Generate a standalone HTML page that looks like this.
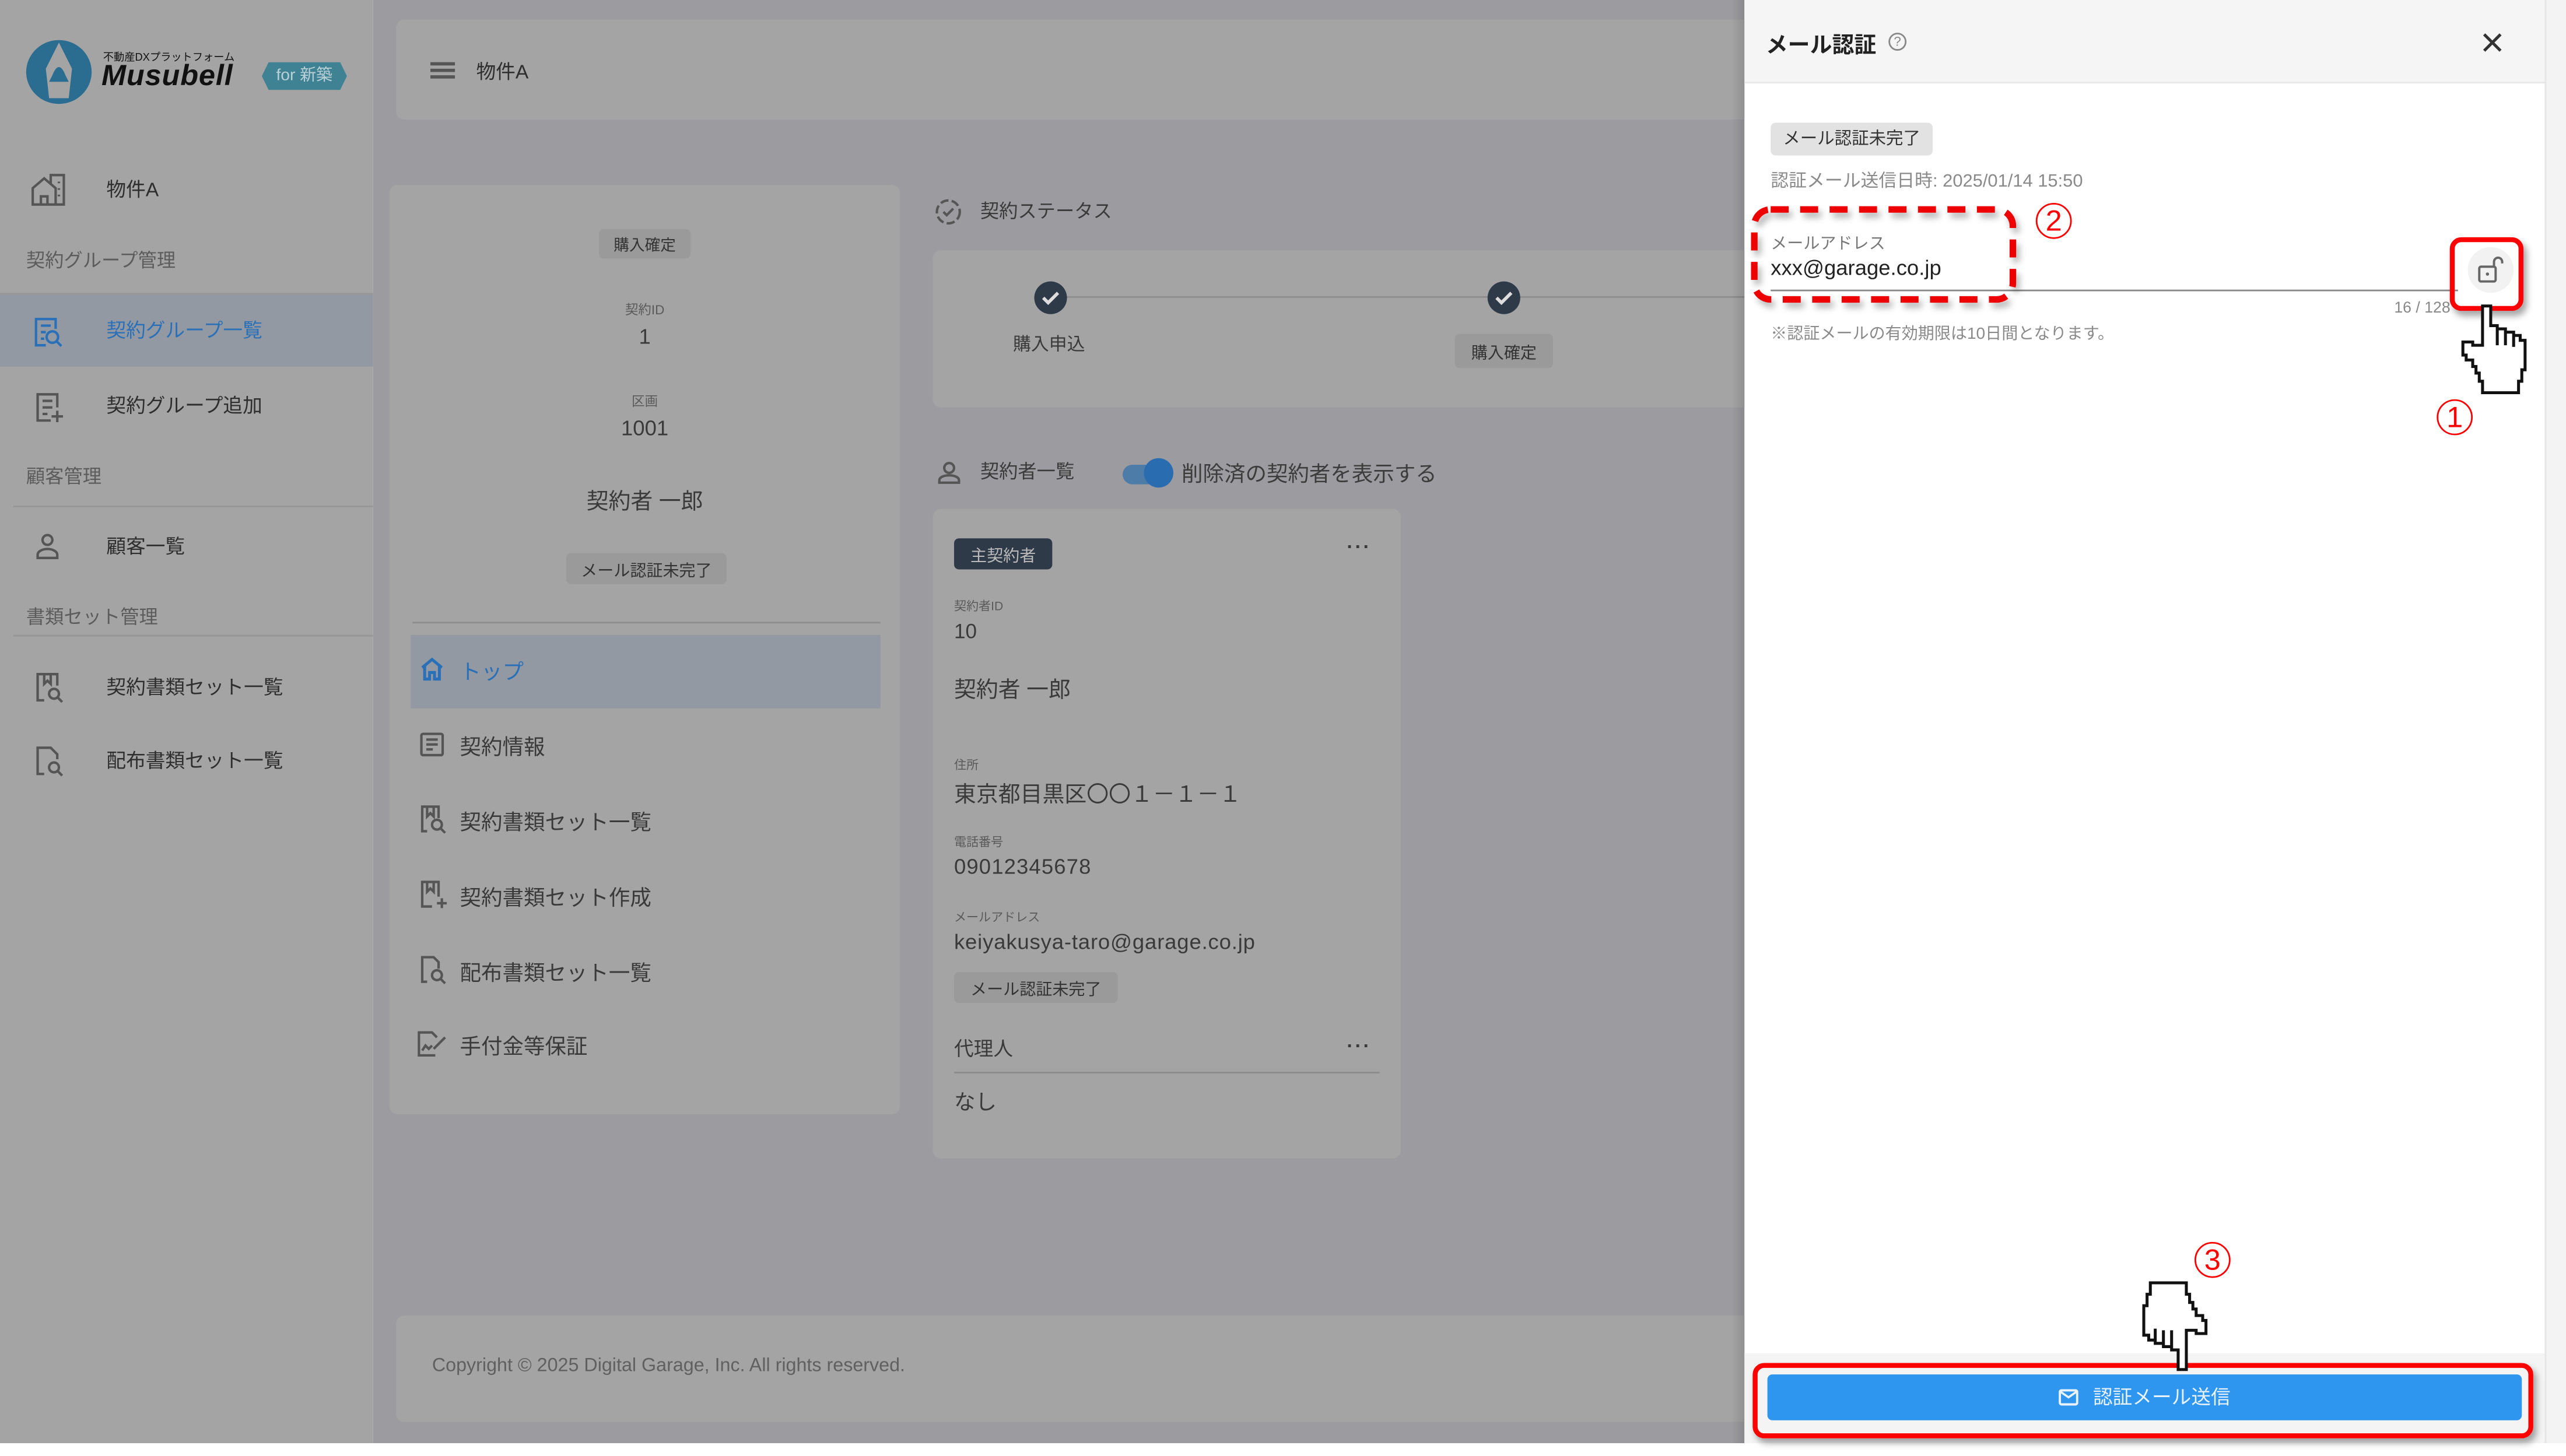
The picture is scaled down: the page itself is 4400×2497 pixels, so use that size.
<!DOCTYPE html>
<html><head><meta charset="utf-8">
<style>
*{box-sizing:border-box;margin:0;padding:0}
html,body{width:4400px;height:2497px;overflow:hidden;background:#fff}
#s{position:absolute;left:0;top:0;width:1568px;height:890px;transform:scale(2.80612);transform-origin:0 0;font-family:"Liberation Sans","Noto Sans CJK JP",sans-serif;color:#3a3a3a}
.a{position:absolute;white-space:nowrap}
.side{left:0;top:0;width:228px;height:882px;background:#a4a4a4}
.main{left:228px;top:0;width:838px;height:882px;background:#9c9ca0}
.card{background:#a4a4a4;border-radius:5px}
.nav{font-size:12px;color:#2e2e2e}
.sec{font-size:11.5px;color:#5c5c5c}
.chipg{background:#9a9a9a;border-radius:3px;font-size:10px;color:#333;padding:2px 9px}
.lbl{font-size:8px;color:#5a5a5a}
.ic{position:absolute;stroke:#555;fill:none;stroke-width:1.5}
.red{position:absolute;border:3px solid #f00;border-radius:7px;box-shadow:2px 3px 4px rgba(0,0,0,.35)}
.num{position:absolute;width:22px;height:22px;border:1.3px solid #f00;border-radius:50%;color:#f00;font-size:18px;line-height:20px;text-align:center}
</style></head><body><div id="s">
<div class="a side"></div>
<svg class="a" style="left:15px;top:24px" width="42" height="40" viewBox="0 0 42 40"><ellipse cx="21" cy="20" rx="20" ry="19.5" fill="#2a6d90"/><path d="M21 2 L13 18 L15 36 L27 36 L29 18 Z" fill="#a4a4a4"/><path d="M17 22 Q21 12 25 22 L27 26 L15 26 Z" fill="#2a6d90"/></svg>
<div class="a" style="left:63px;top:29px;font-size:6.5px;color:#111">不動産DXプラットフォーム</div>
<div class="a" style="left:62px;top:36px;font-size:18px;font-weight:bold;font-style:italic;color:#111;letter-spacing:.3px">Musubell</div>
<div class="a" style="left:160px;top:38px;width:52px;height:17px;background:#3e8293;clip-path:polygon(8% 0,92% 0,100% 50%,92% 100%,8% 100%,0 50%);color:#b9d0d6;font-size:10px;line-height:17px;text-align:center">for 新築</div>

<svg class="ic" style="left:19px;top:106px" width="22" height="20" viewBox="0 0 22 20"><path d="M1 19V9l7-6 7 6v10H1zM6 19v-5h4v5M12 6V1h8v18h-5M17 5v1M17 9v1M17 13v1"/></svg>
<div class="a nav" style="left:65px;top:107px">物件A</div>
<div class="a sec" style="left:16px;top:151px">契約グループ管理</div>
<div class="a" style="left:0;top:179px;width:228px;height:1px;background:#969696"></div>
<div class="a" style="left:0;top:180px;width:228px;height:44px;background:#9299a2"></div>
<svg class="ic" style="left:20px;top:193px;stroke:#2a70b8" width="20" height="20" viewBox="0 0 20 20"><path d="M14 8V2H2v16h6M5 6h6M5 10h3M5 14h2"/><circle cx="12" cy="13" r="3.5"/><path d="M14.5 15.5l3 3"/></svg>
<div class="a nav" style="left:65px;top:193px;color:#2a70b8">契約グループ一覧</div>
<svg class="ic" style="left:21px;top:239px" width="20" height="20" viewBox="0 0 20 20"><path d="M14 10V2H2v16h8M5 6h6M5 10h6M5 14h3M14 12v7M10.5 15.5h7"/></svg>
<div class="a nav" style="left:65px;top:239px">契約グループ追加</div>
<div class="a sec" style="left:16px;top:283px">顧客管理</div>
<div class="a" style="left:8px;top:309px;width:220px;height:1px;background:#969696"></div>
<svg class="ic" style="left:20px;top:325px" width="18" height="18" viewBox="0 0 18 18"><circle cx="9" cy="5" r="3"/><path d="M3 16v-2c0-2 3-3.5 6-3.5s6 1.5 6 3.5v2z"/></svg>
<div class="a nav" style="left:65px;top:325px">顧客一覧</div>
<div class="a sec" style="left:16px;top:369px">書類セット管理</div>
<div class="a" style="left:8px;top:388px;width:220px;height:1px;background:#969696"></div>
<svg class="ic" style="left:21px;top:410px" width="20" height="20" viewBox="0 0 20 20"><path d="M6 18H2V2h12v7M6 2v6l2-2 2 2V2"/><circle cx="12" cy="14" r="3"/><path d="M14.2 16.2l2.8 2.8"/></svg>
<div class="a nav" style="left:65px;top:411px">契約書類セット一覧</div>
<svg class="ic" style="left:21px;top:455px" width="20" height="20" viewBox="0 0 20 20"><path d="M6 18H2V2h8l4 4v3"/><circle cx="12" cy="14" r="3"/><path d="M14.2 16.2l2.8 2.8"/></svg>
<div class="a nav" style="left:65px;top:456px">配布書類セット一覧</div>

<div class="a main"></div>
<div class="a card" style="left:242px;top:12px;width:830px;height:61px"></div>
<div class="a" style="left:263px;top:38px;width:15px;height:2px;background:#555;box-shadow:0 4px 0 #555,0 8px 0 #555"></div>
<div class="a nav" style="left:291px;top:35px">物件A</div>

<div class="a card" style="left:238px;top:113px;width:312px;height:568px"></div>
<div class="a chipg" style="left:366px;top:140px;font-size:9.5px">購入確定</div>
<div class="a lbl" style="left:238px;width:312px;text-align:center;top:184px">契約ID</div>
<div class="a" style="left:238px;width:312px;text-align:center;top:198px;font-size:13px">1</div>
<div class="a lbl" style="left:238px;width:312px;text-align:center;top:240px">区画</div>
<div class="a" style="left:238px;width:312px;text-align:center;top:254px;font-size:13px">1001</div>
<div class="a" style="left:238px;width:312px;text-align:center;top:295px;font-size:13.5px">契約者 一郎</div>
<div class="a chipg" style="left:346px;top:338px">メール認証未完了</div>
<div class="a" style="left:252px;top:380px;width:286px;height:1px;background:#8e8e8e"></div>
<div class="a" style="left:251px;top:388px;width:287px;height:45px;background:#9299a2"></div>
<svg class="ic" style="left:256px;top:401px;stroke:#2a70b8;stroke-width:1.8" width="16" height="16" viewBox="0 0 16 16"><path d="M2 7L8 2l6 5M3.5 6v8h3v-4h3v4h3V6"/></svg>
<div class="a" style="left:281px;top:400px;font-size:13px;color:#2a70b8">トップ</div>
<div class="a" style="left:281px;top:446px;font-size:13px">契約情報</div>
<div class="a" style="left:281px;top:492px;font-size:13px">契約書類セット一覧</div>
<div class="a" style="left:281px;top:538px;font-size:13px">契約書類セット作成</div>
<div class="a" style="left:281px;top:584px;font-size:13px">配布書類セット一覧</div>
<div class="a" style="left:281px;top:629px;font-size:13px">手付金等保証</div>
<svg class="ic" style="left:256px;top:447px" width="16" height="16" viewBox="0 0 16 16"><rect x="1.5" y="1.5" width="13" height="13" rx="1"/><path d="M4.5 5h7M4.5 8h7M4.5 11h4"/></svg>
<svg class="ic" style="left:256px;top:492px" width="18" height="18" viewBox="0 0 18 18"><path d="M5 16H2V1h10v7M5 1v6l2-2 2 2V1"/><circle cx="11" cy="12" r="3"/><path d="M13 14l3 3"/></svg>
<svg class="ic" style="left:256px;top:538px" width="18" height="18" viewBox="0 0 18 18"><path d="M8 16H2V1h10v9M5 1v6l2-2 2 2V1M14 11v6M11 14h6"/></svg>
<svg class="ic" style="left:256px;top:584px" width="18" height="18" viewBox="0 0 18 18"><path d="M5 16H2V1h7l3 3v4"/><circle cx="11" cy="12" r="3"/><path d="M13 14l3 3"/></svg>
<svg class="ic" style="left:254px;top:629px" width="20" height="18" viewBox="0 0 20 18"><path d="M12 16H2V2h8l3 3M4 13l2-3 2 2 2-2M11 12l7-7"/></svg>

<svg class="ic" style="left:571px;top:121px" width="17" height="17" viewBox="0 0 17 17"><circle cx="8.5" cy="8.5" r="7" stroke-dasharray="5 2"/><path d="M5.5 8.5l2 2 4-4"/></svg>
<div class="a" style="left:599px;top:121px;font-size:11.5px">契約ステータス</div>
<div class="a card" style="left:570px;top:153px;width:510px;height:96px"></div>
<div class="a" style="left:650px;top:181px;width:260px;height:1px;background:#8c8c8c"></div>
<div class="a" style="left:928px;top:181px;width:140px;height:1px;background:#8c8c8c"></div>
<svg class="a" style="left:631px;top:171px" width="22" height="22"><circle cx="11" cy="11" r="10" fill="#2f3a48"/><path d="M6.5 11l3 3 6-6" stroke="#ddd" stroke-width="2" fill="none"/></svg>
<svg class="a" style="left:908px;top:171px" width="22" height="22"><circle cx="11" cy="11" r="10" fill="#2f3a48"/><path d="M6.5 11l3 3 6-6" stroke="#ddd" stroke-width="2" fill="none"/></svg>
<div class="a" style="left:619px;top:202px;font-size:11px">購入申込</div>
<div class="a chipg" style="left:889px;top:204px;font-size:10px;padding:3px 10px">購入確定</div>

<svg class="ic" style="left:572px;top:281px" width="16" height="16" viewBox="0 0 16 16"><circle cx="8" cy="5" r="3"/><path d="M2 14v-1.5c0-2 3-3 6-3s6 1 6 3V14z"/></svg>
<div class="a" style="left:599px;top:280px;font-size:11.5px">契約者一覧</div>
<div class="a" style="left:686px;top:284px;width:30px;height:12px;border-radius:6px;background:#4e7ca8"></div>
<div class="a" style="left:699px;top:280px;width:18px;height:18px;border-radius:50%;background:#2a6cb0"></div>
<div class="a" style="left:722px;top:279px;font-size:13px;color:#3c3c3c">削除済の契約者を表示する</div>

<div class="a card" style="left:570px;top:311px;width:286px;height:397px"></div>
<div class="a" style="left:583px;top:329px;background:#2f3a48;color:#bbb;font-size:10px;padding:2px 10px;border-radius:3px">主契約者</div>
<div class="a" style="left:823px;top:327px;font-size:12px;font-weight:bold;letter-spacing:1px">···</div>
<div class="a lbl" style="left:583px;top:365px;font-size:7.5px">契約者ID</div>
<div class="a" style="left:583px;top:379px;font-size:12.5px">10</div>
<div class="a" style="left:583px;top:410px;font-size:13.5px">契約者 一郎</div>
<div class="a lbl" style="left:583px;top:462px;font-size:7.5px">住所</div>
<div class="a" style="left:583px;top:474px;font-size:13.5px">東京都目黒区〇〇１－１－１</div>
<div class="a lbl" style="left:583px;top:509px;font-size:7.5px">電話番号</div>
<div class="a" style="left:583px;top:522px;font-size:13px;letter-spacing:.4px">09012345678</div>
<div class="a lbl" style="left:583px;top:555px;font-size:7.5px">メールアドレス</div>
<div class="a" style="left:583px;top:568px;font-size:13px;letter-spacing:.3px">keiyakusya-taro@garage.co.jp</div>
<div class="a chipg" style="left:583px;top:594px;padding:2px 10px">メール認証未完了</div>
<div class="a" style="left:583px;top:632px;font-size:12px">代理人</div>
<div class="a" style="left:823px;top:632px;font-size:12px;font-weight:bold;letter-spacing:1px">···</div>
<div class="a" style="left:583px;top:655px;width:260px;height:1px;background:#8c8c8c"></div>
<div class="a" style="left:583px;top:663px;font-size:13px">なし</div>

<div class="a card" style="left:242px;top:804px;width:830px;height:65px"></div>
<div class="a" style="left:264px;top:829px;font-size:11.5px;color:#606060">Copyright © 2025 Digital Garage, Inc. All rights reserved.</div>

<div class="a" style="left:1058px;top:0;width:8px;height:882px;background:linear-gradient(90deg,rgba(0,0,0,0),rgba(0,0,0,.12))"></div>
<div class="a" style="left:1066px;top:0;width:489px;height:882px;background:#fff"></div>
<div class="a" style="left:1555px;top:0;width:13px;height:882px;background:#f3f3f3;border-left:1px solid #e6e6e6"></div>
<div class="a" style="left:1066px;top:0;width:489px;height:51px;background:#f5f5f5;border-bottom:1px solid #e8e8e8"></div>
<div class="a" style="left:1079px;top:16px;font-size:13.5px;font-weight:bold;color:#222">メール認証</div>
<div class="a" style="left:1154px;top:20px;width:11px;height:11px;border:1px solid #888;border-radius:50%;font-size:8px;line-height:9px;text-align:center;color:#888">?</div>
<svg class="a" style="left:1516px;top:19px" width="14" height="14"><path d="M2 2l10 10M12 2L2 12" stroke="#333" stroke-width="1.8"/></svg>
<div class="a" style="left:1082px;top:75px;height:20px;width:99px;background:#e2e2e2;border-radius:3px;font-size:10.5px;line-height:20px;text-align:center;color:#333">メール認証未完了</div>
<div class="a" style="left:1082px;top:102px;font-size:11px;color:#8a8a8a">認証メール送信日時: 2025/01/14 15:50</div>
<div class="a" style="left:1082px;top:140px;font-size:10px;color:#777">メールアドレス</div>
<div class="a" style="left:1082px;top:156px;font-size:13px;color:#222">xxx@garage.co.jp</div>
<div class="a" style="left:1082px;top:177px;width:420px;height:1px;background:#888"></div>
<div class="a" style="left:1463px;top:183px;font-size:9.5px;color:#888">16 / 128</div>
<div class="a" style="left:1082px;top:195px;font-size:10px;color:#8a8a8a">※認証メールの有効期限は10日間となります。</div>
<div class="a" style="left:1508px;top:151px;width:28px;height:28px;border-radius:50%;background:#f2f2f2"></div>
<svg class="a" style="left:1512px;top:155px" width="20" height="20" viewBox="0 0 20 20"><rect x="3" y="8" width="10" height="9" rx="1" fill="none" stroke="#666" stroke-width="1.4"/><circle cx="8" cy="12.5" r="1" fill="#666"/><path d="M12 8V5a2.5 2.5 0 0 1 5 0v1" fill="none" stroke="#666" stroke-width="1.4"/></svg>

<div class="a" style="left:1066px;top:827px;width:489px;height:55px;background:#f4f4f4"></div>
<div class="a" style="left:1080px;top:840px;width:461px;height:28px;background:#2f96ef;border-radius:3px;color:#e8f2fc;font-size:12px;line-height:28px;text-align:center"><svg width="12" height="10" viewBox="0 0 12 10" style="margin-right:9px;vertical-align:-1px"><rect x="0.7" y="0.7" width="10.6" height="8.6" rx="1" fill="none" stroke="#e8f2fc" stroke-width="1.4"/><path d="M1 1.5l5 3.5 5-3.5" fill="none" stroke="#e8f2fc" stroke-width="1.3"/></svg>認証メール送信</div>

<svg class="a" style="left:1069px;top:125px;filter:drop-shadow(2px 3px 2px rgba(0,0,0,.3))" width="166" height="63"><rect x="3" y="3" width="158" height="55" rx="10" fill="none" stroke="#e00" stroke-width="4" stroke-dasharray="11 7"/></svg>
<div class="red" style="left:1497px;top:145px;width:45px;height:45px"></div>
<div class="red" style="left:1071px;top:833px;width:477px;height:46px"></div>
<div class="num" style="left:1244px;top:124px">2</div>
<div class="num" style="left:1489px;top:244px">1</div>
<div class="num" style="left:1341px;top:759px">3</div>
<svg class="a" style="left:1503px;top:186px" width="44" height="56" viewBox="0 0 44 56"><path d="M14 1L19 1L19 13L23 13L23 15L28 15L28 17L33 17L33 19L37 19L37 22L40 22L40 40L38 40L38 47L36 47L36 54L14 54L14 47L12 47L12 42L10 42L10 38L8 38L8 34L4 34L4 31L2 31L2 23L8 23L8 25L14 25Z M23 15V25 M28 17V25 M33 19V26" fill="#fff" stroke="#111" stroke-width="1.8"/></svg>
<svg class="a" style="left:1306px;top:782px;transform:scale(-1,-1)" width="44" height="56" viewBox="0 0 44 56"><path d="M14 1L19 1L19 13L23 13L23 15L28 15L28 17L33 17L33 19L37 19L37 22L40 22L40 40L38 40L38 47L36 47L36 54L14 54L14 47L12 47L12 42L10 42L10 38L8 38L8 34L4 34L4 31L2 31L2 23L8 23L8 25L14 25Z M23 15V25 M28 17V25 M33 19V26" fill="#fff" stroke="#111" stroke-width="1.8"/></svg>
</div></body></html>
